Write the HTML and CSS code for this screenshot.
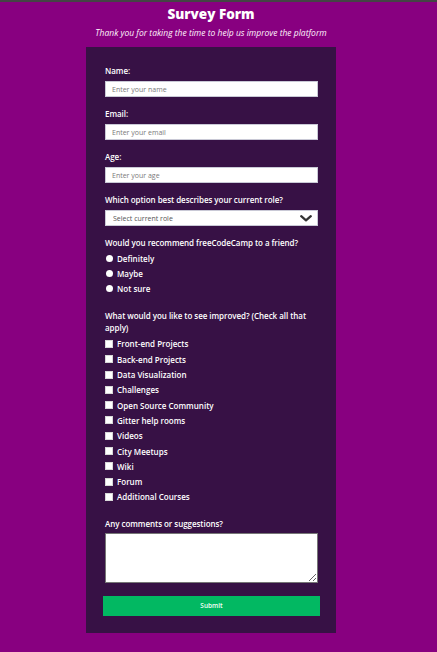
FILE: index.html
```html
<!DOCTYPE html>
<html lang="en">
<head>
<meta charset="utf-8">
<title>Survey Form</title>
<link rel="stylesheet" href="styles.css">
</head>
<body>
<div class="topline"></div>
<div class="page">
  <header class="head">
    <h1 class="title">Survey Form</h1>
    <p class="subtitle">Thank you for taking the time to help us improve the platform</p>
  </header>
  <form class="card">
    <div class="group">
      <label class="label" for="name">Name:</label>
      <input class="field" id="name" type="text" placeholder="Enter your name">
    </div>
    <div class="group">
      <label class="label" for="email">Email:</label>
      <input class="field" id="email" type="email" placeholder="Enter your email">
    </div>
    <div class="group">
      <label class="label" for="age">Age:</label>
      <input class="field" id="age" type="number" placeholder="Enter your age">
    </div>
    <div class="group">
      <label class="label" for="role">Which option best describes your current role?</label>
      <div class="select-wrap">
        <select class="field select" id="role">
          <option>Select current role</option>
        </select>
        <svg class="chevron" width="12" height="7" viewBox="0 0 12 7"><path d="M1.2 1.2 L6 5.4 L10.8 1.2" fill="none" stroke="#333" stroke-width="2.2" stroke-linecap="round" stroke-linejoin="round"/></svg>
      </div>
    </div>
    <div class="group group-radio">
      <div class="label label-tight">Would you recommend freeCodeCamp to a friend?</div>
      <label class="choice"><input class="radio" type="radio" name="rec">Definitely</label>
      <label class="choice"><input class="radio" type="radio" name="rec">Maybe</label>
      <label class="choice"><input class="radio" type="radio" name="rec">Not sure</label>
    </div>
    <div class="group group-check">
      <div class="label label-wrap">What would you like to see improved? (Check all that apply)</div>
      <label class="choice choice-check"><input class="check" type="checkbox">Front-end Projects</label>
      <label class="choice choice-check"><input class="check" type="checkbox">Back-end Projects</label>
      <label class="choice choice-check"><input class="check" type="checkbox">Data Visualization</label>
      <label class="choice choice-check"><input class="check" type="checkbox">Challenges</label>
      <label class="choice choice-check"><input class="check" type="checkbox">Open Source Community</label>
      <label class="choice choice-check"><input class="check" type="checkbox">Gitter help rooms</label>
      <label class="choice choice-check"><input class="check" type="checkbox">Videos</label>
      <label class="choice choice-check"><input class="check" type="checkbox">City Meetups</label>
      <label class="choice choice-check"><input class="check" type="checkbox">Wiki</label>
      <label class="choice choice-check"><input class="check" type="checkbox">Forum</label>
      <label class="choice choice-check"><input class="check" type="checkbox">Additional Courses</label>
    </div>
    <div class="group group-comments">
      <label class="label label-comments" for="comments">Any comments or suggestions?</label>
      <textarea class="comments" id="comments"></textarea>
    </div>
    <button class="submit" type="submit">Submit</button>
  </form>
</div>
</body>
</html>
```
FILE: styles.css
```css
* { box-sizing: border-box; }
html, body {
  margin: 0;
  padding: 0;
}
body {
  background: #880080;
  font-family: "Open Sans", "DejaVu Sans", sans-serif;
  color: #ffffff;
  height: 652px;
  overflow: hidden;
}
.topline {
  height: 2px;
  background: #444444;
}
.page {
  width: 422px;
}
.head {
  padding-top: 2px;
  text-align: center;
}
.title {
  margin: 0;
  font-size: 13.5px;
  line-height: 20px;
  font-weight: 800;
}
.subtitle {
  margin: 4px 0 0;
  font-size: 8.5px;
  line-height: 10px;
  font-style: italic;
  font-weight: 500;
  color: #fff4fc;
}
.card {
  width: 250px;
  margin: 9px auto 0;
  background: #371145;
  padding: 19px 18px 17px 19px;
}
.group {
  margin-bottom: 12px;
}
.label {
  display: block;
  font-size: 8px;
  line-height: 10px;
  font-weight: 600;
  margin-bottom: 5px;
  letter-spacing: -0.05px;
}
.label-tight { margin-bottom: 3px; }
.label-wrap {
  line-height: 12px;
  margin-bottom: 2.3px;
}
.label-comments { margin-bottom: 4px; }
.group-radio { margin-bottom: 14px; }
.group-check { margin-bottom: 14.3px; }
.group-comments { margin-bottom: 13px; }
.field {
  display: block;
  width: 213px;
  height: 16px;
  margin: 0;
  border: 1px solid #c9c9d6;
  border-radius: 0;
  background: #ffffff;
  font-family: inherit;
  font-size: 7px;
  padding: 0 6px;
  color: #444;
  outline: none;
}
.field::placeholder { color: #7a7a7a; }
.select-wrap {
  position: relative;
  width: 213px;
}
.select {
  appearance: none;
  -webkit-appearance: none;
  padding-left: 7px;
  color: #555;
}
.chevron {
  position: absolute;
  right: 6px;
  top: 5px;
}
.choice {
  display: flex;
  align-items: center;
  height: 15px;
  font-size: 8px;
  font-weight: 600;
}
.choice-check { height: 15.3px; }
.radio {
  appearance: none;
  -webkit-appearance: none;
  width: 7px;
  height: 7px;
  margin: 0 4.5px 0 0.5px;
  border-radius: 50%;
  background: #ffffff;
  border: none;
  flex: none;
}
.check {
  appearance: none;
  -webkit-appearance: none;
  width: 8px;
  height: 8px;
  margin: 0 4px 0 0;
  border: 1px solid #d8d8d8;
  background: #ffffff;
  border-radius: 0;
  flex: none;
}
.comments {
  display: block;
  width: 213px;
  height: 50px;
  margin: 0;
  border: 1px solid #767676;
  background: #ffffff;
  resize: both;
}
.submit {
  display: block;
  width: 217px;
  height: 20px;
  margin: 0 0 0 -2px;
  border: none;
  background: #02b862;
  color: #f4fff8;
  font-family: inherit;
  font-size: 6.5px;
  font-weight: 600;
  cursor: pointer;
}
```
